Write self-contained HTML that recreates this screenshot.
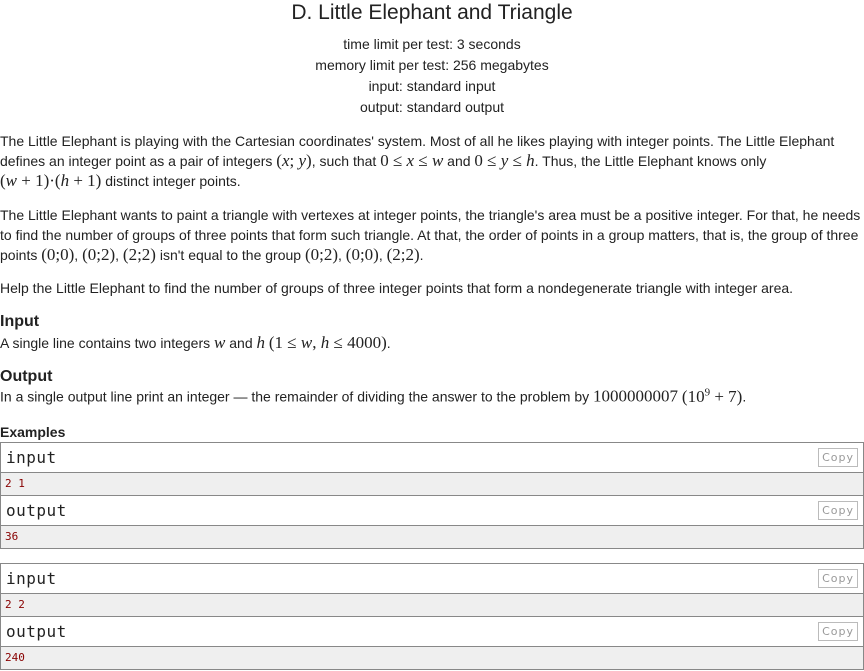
<!DOCTYPE html>
<html><head><meta charset="utf-8"><style>
body{margin:0;width:864px;height:671px;background:#fff;font-family:"Liberation Sans",sans-serif;color:#222;font-size:14px;position:relative;overflow:hidden}
.a{position:absolute;left:0;white-space:nowrap}
.c{position:absolute;left:0;width:864px;text-align:center}
.m{font-family:"Liberation Serif",serif;font-size:17px}
.m i{font-style:italic}
h3{margin:0;font-size:16px;font-weight:bold}
.box{position:absolute;left:0;width:862px;border:1px solid #888}
.hd{height:29px;border-bottom:1px solid #888;font-family:"DejaVu Sans Mono",monospace;font-size:16px;line-height:29px;padding-left:5px;position:relative;background:#fff;letter-spacing:0.5px}
.dt{height:22px;border-bottom:1px solid #888;background:#efefef;font-family:"DejaVu Sans Mono",monospace;font-size:11px;color:#800;line-height:22px;padding-left:4px}
.dt:last-child{border-bottom:none}
.cp{position:absolute;right:5px;top:5px;border:1px solid #bbb;color:#999;font-family:"DejaVu Sans",sans-serif;font-size:11px;line-height:17px;padding:0 3px;letter-spacing:1px}
</style></head><body>
<div class="c" style="top:1px;font-size:21px">D. Little Elephant and Triangle</div>
<div class="c" style="top:36px">time limit per test: 3 seconds</div>
<div class="c" style="top:57px">memory limit per test: 256 megabytes</div>
<div class="c" style="top:78px">input: standard input</div>
<div class="c" style="top:99px">output: standard output</div>
<div class="a" style="top:133px">The Little Elephant is playing with the Cartesian coordinates' system. Most of all he likes playing with integer points. The Little Elephant</div>
<div class="a" style="top:151px">defines an integer point as a pair of integers <span class="m">(<i>x</i>; <i>y</i>)</span>, such that <span class="m">0 ≤ <i>x</i> ≤ <i>w</i></span> and <span class="m">0 ≤ <i>y</i> ≤ <i>h</i></span>. Thus, the Little Elephant knows only</div>
<div class="a" style="top:171px"><span class="m">(<i>w</i> + 1)·(<i>h</i> + 1)</span> distinct integer points.</div>
<div class="a" style="top:207px">The Little Elephant wants to paint a triangle with vertexes at integer points, the triangle's area must be a positive integer. For that, he needs</div>
<div class="a" style="top:227px">to find the number of groups of three points that form such triangle. At that, the order of points in a group matters, that is, the group of three</div>
<div class="a" style="top:245px">points <span class="m">(0;0)</span>, <span class="m">(0;2)</span>, <span class="m">(2;2)</span> isn't equal to the group <span class="m">(0;2)</span>, <span class="m">(0;0)</span>, <span class="m">(2;2)</span>.</div>
<div class="a" style="top:280px">Help the Little Elephant to find the number of groups of three integer points that form a nondegenerate triangle with integer area.</div>
<div class="a" style="top:313px"><h3>Input</h3></div>
<div class="a" style="top:333px">A single line contains two integers <span class="m"><i>w</i></span> and <span class="m"><i>h</i></span> <span class="m">(1 ≤ <i>w</i>, <i>h</i> ≤ 4000)</span>.</div>
<div class="a" style="top:368px"><h3>Output</h3></div>
<div class="a" style="top:386px">In a single output line print an integer — the remainder of dividing the answer to the problem by <span class="m">1000000007</span> <span class="m">(10<sup style="font-size:11px">9</sup> + 7)</span>.</div>
<div class="a" style="top:424px;font-weight:bold">Examples</div>
<div class="box" style="top:442px"><div class="hd">input<span class="cp">Copy</span></div><div class="dt">2 1</div><div class="hd">output<span class="cp">Copy</span></div><div class="dt">36</div></div>
<div class="box" style="top:563px"><div class="hd">input<span class="cp">Copy</span></div><div class="dt">2 2</div><div class="hd">output<span class="cp">Copy</span></div><div class="dt">240</div></div>
</body></html>
